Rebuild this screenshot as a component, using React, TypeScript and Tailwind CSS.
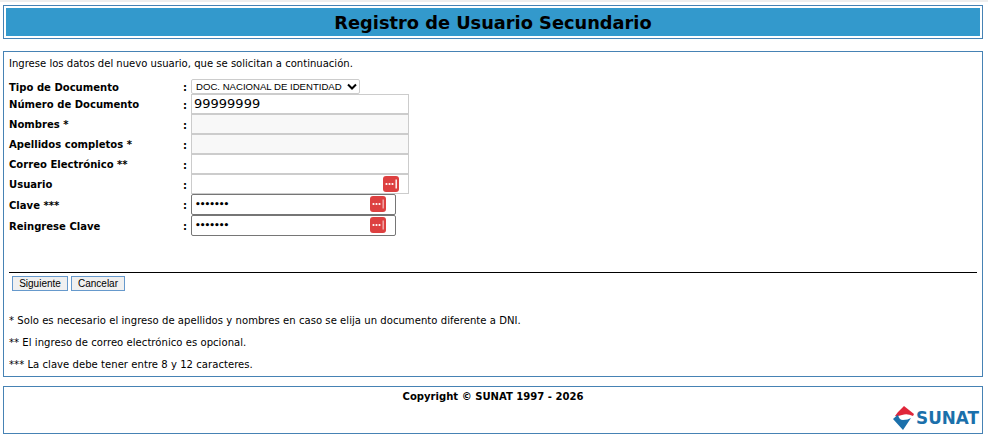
const font = "font-['DejaVu_Sans',sans-serif]";

function KeyIcon({ className, bar = "#ffffff" }: { className: string; bar?: string }) {
  return (
    <span className={`absolute flex h-[16px] w-[16px] items-center justify-center rounded-[3px] bg-[#dd4040] ${className}`}>
      <svg width="16" height="16" viewBox="0 0 16 16">
        <circle cx="3.5" cy="8" r="1.1" fill="#fff" />
        <circle cx="6.5" cy="8" r="1.1" fill="#fff" />
        <circle cx="9.5" cy="8" r="1.1" fill="#fff" />
        <rect x="12.5" y="3.5" width="1.4" height="9" fill={bar} />
      </svg>
    </span>
  );
}

function Row({ label, height, top = "pt-[4px]", colonTop = "pt-[5px]", children }: { label: string; height: string; top?: string; colonTop?: string; children: React.ReactNode }) {
  return (
    <div className={`flex ${height}`}>
      <div className={`w-[174px] font-bold text-[10.05px] leading-[14px] text-black ${top}`}>{label}</div>
      <div className={`w-[8px] font-bold text-[10.05px] leading-[14px] text-black ${colonTop}`}>:</div>
      {children}
    </div>
  );
}

function TextBox({ bg = "bg-white", children }: { bg?: string; children?: React.ReactNode }) {
  return (
    <div className={`relative h-[20px] w-[218px] border border-[#cccccc] ${bg}`}>{children}</div>
  );
}

function PassBox({ value }: { value: string }) {
  return (
    <div className="relative h-[21px] w-[205px] rounded-[2px] border border-[#767676] bg-white pl-[3px] text-[9px] font-bold leading-[19px] tracking-[-1px] text-black">
      {value}
      <KeyIcon className="right-[9px] top-[1px]" bar="#f2b0b0" />
    </div>
  );
}

export default function App() {
  return (
    <div className={`min-h-[439px] w-[988px] bg-white pt-[5px] text-black ${font}`}>
      <div className="h-[2px] -mt-[5px] mb-[3px] bg-[#eeeeee]" />
      <div className="mx-[3px] w-[980px] border border-[#4682b4] p-[2px]">
        <h1 className="flex h-[28px] items-center justify-center bg-[#3399cc] pt-[2px] text-[17.8px] font-bold text-black">
          Registro de Usuario Secundario
        </h1>
      </div>

      <div className="mx-[3px] mt-[12px] h-[326px] w-[980px] border border-[#4682b4] px-[5px]">
        <p className="mt-[5px] text-[10.05px] leading-[14px]">
          Ingrese los datos del nuevo usuario, que se solicitan a continuación.
        </p>
        <div className="mt-[8px]">
          <Row label="Tipo de Documento" height="h-[15px]" top="pt-[2px]" colonTop="pt-[2px]">
            <div className="relative h-[15px] w-[169px]">
              <select className="block h-[15px] w-full appearance-none rounded-[2px] border border-[#cccccc] bg-white py-0 pl-[4px] font-['Liberation_Sans',sans-serif] text-[9.6px] leading-[13px] text-black outline-none">
                <option>DOC. NACIONAL DE IDENTIDAD</option>
              </select>
              <svg width="10" height="7" viewBox="0 0 10 7" className="absolute right-[3px] top-[4px]">
                <path d="M1 1.5 L5 5.5 L9 1.5" fill="none" stroke="#000" strokeWidth="2" />
              </svg>
            </div>
          </Row>
          <Row label="Número de Documento" height="h-[20px]">
            <TextBox>
              <span className="absolute left-[2px] top-[0px] text-[13px] leading-[18px]">99999999</span>
            </TextBox>
          </Row>
          <Row label="Nombres *" height="h-[20px]">
            <TextBox bg="bg-[#f8f8f8]" />
          </Row>
          <Row label="Apellidos completos *" height="h-[20px]">
            <TextBox bg="bg-[#f8f8f8]" />
          </Row>
          <Row label="Correo Electrónico **" height="h-[20px]">
            <TextBox />
          </Row>
          <Row label="Usuario" height="h-[20px]">
            <TextBox>
              <KeyIcon className="right-[9px] top-[1px]" />
            </TextBox>
          </Row>
          <Row label="Clave ***" height="h-[21px]" top="pt-[5px]" colonTop="pt-[5px]">
            <PassBox value="•••••••" />
          </Row>
          <Row label="Reingrese Clave" height="h-[21px]" top="pt-[5px]" colonTop="pt-[5px]">
            <PassBox value="•••••••" />
          </Row>
        </div>

        <div className="mt-[36px] border-t border-black" />
        <div className="mt-[3px] flex gap-[3px] pl-[3px]">
          <button className="h-[15px] w-[56px] border border-[#6699cc] bg-[#f0f0f0] font-['Liberation_Sans',sans-serif] text-[10px] leading-[13px] text-black">
            Siguiente
          </button>
          <button className="h-[15px] w-[54px] border border-[#6699cc] bg-[#f0f0f0] font-['Liberation_Sans',sans-serif] text-[10px] leading-[13px] text-black">
            Cancelar
          </button>
        </div>
        <div className="mt-[23px] flex flex-col gap-[8px] text-[10.05px] leading-[14px] tracking-[0.04px]">
          <p>* Solo es necesario el ingreso de apellidos y nombres en caso se elija un documento diferente a DNI.</p>
          <p>** El ingreso de correo electrónico es opcional.</p>
          <p>*** La clave debe tener entre 8 y 12 caracteres.</p>
        </div>
      </div>

      <div className="mx-[3px] mt-[9px] h-[48px] w-[980px] border border-[#4682b4]">
        <p className="mt-[3px] text-center text-[10.05px] font-bold leading-[14px]">Copyright © SUNAT 1997 - 2026</p>
        <div className="mt-[2px] flex items-center justify-end pr-[3px]">
          <svg width="22" height="24" viewBox="0 0 22 24" className="mr-[1px]">
            <path d="M11 0 L21 8 L20 10 Q14 7 9 9 Q5 10.5 2 10 L5 6 Z" fill="#e0263a" />
            <path d="M0 13 L5 8.5 Q6 14 10 14 Q15 14 18 12 L10 24 Z" fill="#1b70ab" />
          </svg>
          <span className="text-[16.8px] font-bold leading-[20px] text-[#1b70ab]">SUNAT</span>
        </div>
      </div>
    </div>
  );
}
